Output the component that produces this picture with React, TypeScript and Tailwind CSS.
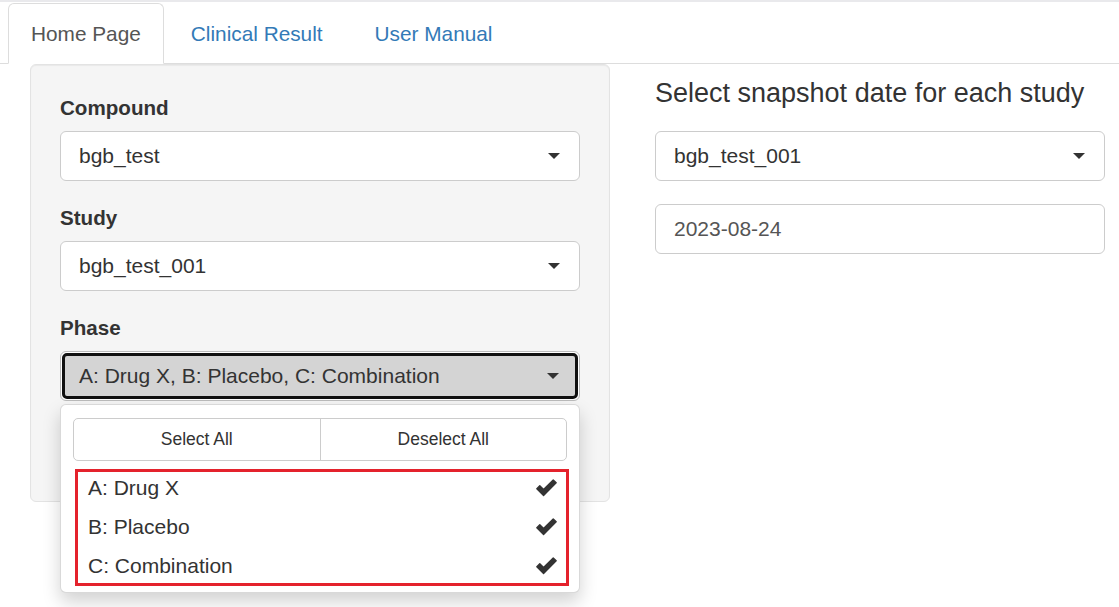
import React from "react";

const font = { fontFamily: '"Liberation Sans", Arial, Helvetica, sans-serif' };

function Caret() {
  return (
    <svg width="12" height="6" viewBox="0 0 12 6" className="shrink-0">
      <polygon points="0,0 12,0 6,6" fill="#333" />
    </svg>
  );
}

function Check() {
  return (
    <svg width="21" height="18" viewBox="0 0 20 17" className="shrink-0">
      <polygon
        points="0.8,9.2 3.6,6.4 7.2,10 16.4,0.8 19.2,3.6 7.2,15.6"
        fill="#333"
        stroke="#333"
        strokeWidth="1.3"
        strokeLinejoin="round"
      />
    </svg>
  );
}

function SelectBox({ value }: { value: string }) {
  return (
    <div className="flex h-[50px] items-center justify-between rounded-[6px] border border-[#ccc] bg-white pl-[18px] pr-[19px] text-[#333]">
      <span>{value}</span>
      <Caret />
    </div>
  );
}

function Label({ children }: { children: React.ReactNode }) {
  return <div className="mb-[9px] block text-[20.6px] font-bold leading-[29px] text-[#333]">{children}</div>;
}

export default function App() {
  const items = ["A: Drug X", "B: Placebo", "C: Combination"];
  return (
    <div className="min-h-[607px] w-full bg-white text-[21px] text-[#333]" style={font}>
      <div className="h-[2px] w-full bg-[#e9e9ec]" />
      <div className="mt-[1px] flex border-b border-[#ddd] pl-[8px] text-[20.8px]">
        <div className="-mb-px flex h-[61px] items-center rounded-t-[6px] border border-[#ddd] border-b-white bg-white px-[22px] text-[#555]">
          Home Page
        </div>
        <div className="-mb-px ml-[2px] flex h-[61px] items-center border border-transparent px-[24px] text-[#337ab7]">
          Clinical Result
        </div>
        <div className="-mb-px ml-[2px] flex h-[61px] items-center border border-transparent px-[24px] text-[#337ab7]">
          User Manual
        </div>
      </div>

      <div className="flex pl-[30px]">
        <div className="w-[580px] rounded-[6px] border border-[#e3e3e3] bg-[#f5f5f5] px-[29px] pb-[28px] pt-[28px] shadow-[inset_0_1px_1px_rgba(0,0,0,0.05)]">
          <Label>Compound</Label>
          <SelectBox value="bgb_test" />
          <div className="h-[22px]" />
          <Label>Study</Label>
          <SelectBox value="bgb_test_001" />
          <div className="h-[22px]" />
          <Label>Phase</Label>
          <div className="relative">
            <div className="h-[50px] rounded-[6px] border border-[#bbb] bg-white p-px">
              <div className="flex h-full items-center justify-between rounded-[5px] border-[3px] border-[#111] bg-[#d4d4d4] pl-[14px] pr-[16px] text-[#333]">
                <span>A: Drug X, B: Placebo, C: Combination</span>
                <Caret />
              </div>
            </div>
            <div className="absolute left-0 top-[53px] z-10 w-full rounded-[6px] border border-[rgba(0,0,0,0.15)] bg-white pb-[7px] pt-[7px] shadow-[0_9px_18px_rgba(0,0,0,0.175)]">
              <div className="px-[12px] pb-[7px] pt-[6px]">
                <div className="flex h-[43px] rounded-[5px] border border-[#ccc] text-[17.5px] text-[#333]">
                  <div className="flex flex-1 items-center justify-center border-r border-[#ccc]">Select All</div>
                  <div className="flex flex-1 items-center justify-center">Deselect All</div>
                </div>
              </div>
              <div className="relative">
                {items.map((it) => (
                  <div key={it} className="flex h-[39px] items-center justify-between pl-[27px] pr-[22px] text-[#333]">
                    <span>{it}</span>
                    <Check />
                  </div>
                ))}
                <div className="pointer-events-none absolute bottom-[-1px] left-[14px] right-[10px] top-[1px] border-[3px] border-[#e4222c]" />
              </div>
            </div>
          </div>
          <div className="h-[22px]" />
          <div className="h-[50px]" />
        </div>

        <div className="ml-[45px] w-[450px]">
          <h4 className="mb-[23px] mt-[15px] text-[27px] font-normal leading-[29px] text-[#333]">
            Select snapshot date for each study
          </h4>
          <SelectBox value="bgb_test_001" />
          <div className="mt-[23px] flex h-[50px] items-center rounded-[6px] border border-[#ccc] bg-white pl-[18px] text-[#555]">
            2023-08-24
          </div>
        </div>
      </div>
    </div>
  );
}
